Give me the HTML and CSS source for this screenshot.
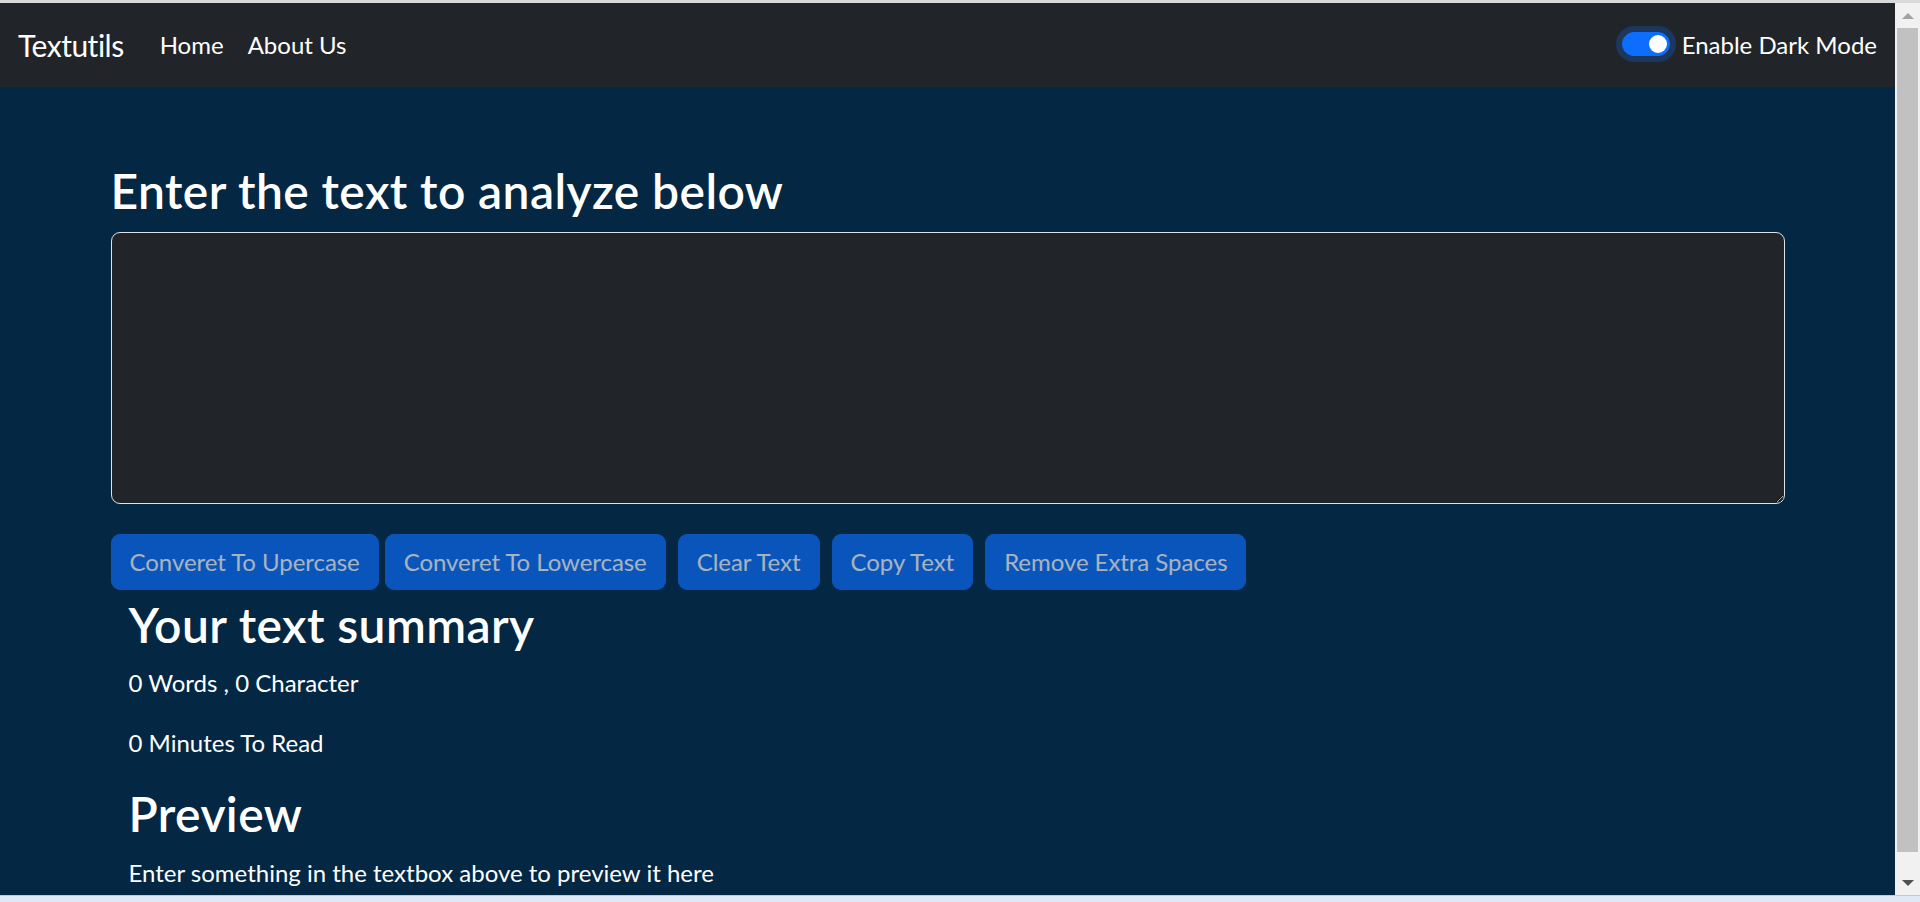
FILE: index.html
```html
<!DOCTYPE html>
<html lang="en">
<head>
<meta charset="utf-8">
<title>Textutils</title>
<link rel="stylesheet" href="styles.css">
</head>
<body>
<div class="window">
  <div class="chrome-top"></div>
  <div class="viewport">
    <div class="page">
      <nav class="navbar">
        <a class="brand" href="#">Textutils</a>
        <ul class="nav-links">
          <li><a class="nav-link" href="#">Home</a></li>
          <li><a class="nav-link" href="#">About Us</a></li>
        </ul>
        <div class="switch-wrap">
          <span class="switch"><span class="knob"></span></span>
          <label class="switch-label">Enable Dark Mode</label>
        </div>
      </nav>
      <div class="alert-slot"></div>
      <main class="container">
        <h1 class="heading">Enter the text to analyze below</h1>
        <div class="field">
          <textarea class="text-input" id="myBox"></textarea>
        </div>
        <div class="btn-row">
          <button class="btn btn-first">Converet To Upercase</button>
          <button class="btn">Converet To Lowercase</button>
          <button class="btn">Clear Text</button>
          <button class="btn">Copy Text</button>
          <button class="btn">Remove Extra Spaces</button>
        </div>
        <section class="summary">
          <h2 class="heading">Your text summary</h2>
          <p class="line">0 Words , 0 Character</p>
          <p class="line">0 Minutes To Read</p>
          <h2 class="heading">Preview</h2>
          <p class="line">Enter something in the textbox above to preview it here</p>
        </section>
      </main>
    </div>
    <div class="scrollbar">
      <div class="sb-btn"><span class="tri-up"></span></div>
      <div class="sb-thumb"></div>
      <div class="sb-space"></div>
      <div class="sb-btn"><span class="tri-down"></span></div>
    </div>
  </div>
  <div class="chrome-bottom"></div>
</div>
</body>
</html>
```
FILE: styles.css
```css
* { box-sizing: border-box; }

html, body {
  margin: 0;
  padding: 0;
}

body {
  font-family: "Lato", "Noto Sans", sans-serif;
  font-size: 24px;
  color: #ffffff;
  background: #042743;
  overflow: hidden;
}

.window {
  width: 1920px;
  height: 902px;
  display: flex;
  flex-direction: column;
}

.chrome-top {
  height: 3px;
  background: #d9d9d9;
  flex: none;
}

.viewport {
  flex: 1;
  display: flex;
  min-height: 0;
}

.page {
  flex: 1;
  min-width: 0;
  background: #042743;
  overflow: hidden;
}

/* navbar */
.navbar {
  height: 84px;
  background: #212529;
  display: flex;
  align-items: center;
  padding: 0 18px;
}

.brand {
  font-size: 30px;
  letter-spacing: -0.5px;
  color: #ffffff;
  text-decoration: none;
  margin-right: 24px;
  line-height: 1.2;
}

.nav-links {
  list-style: none;
  margin: 0;
  padding: 0;
  display: flex;
}

.nav-link {
  display: block;
  padding: 12px;
  color: #ffffff;
  text-decoration: none;
  line-height: 1.5;
}

.switch-wrap {
  margin-left: auto;
  display: flex;
  align-items: center;
  gap: 12px;
}

.switch {
  width: 48px;
  height: 24px;
  border-radius: 12px;
  background: #0d6efd;
  border: 1.5px solid #0d6efd;
  box-shadow: 0 0 0 6px rgba(13, 110, 253, 0.25);
  display: flex;
  align-items: center;
  justify-content: flex-end;
  padding-right: 1.5px;
  margin-top: -2px;
}

.knob {
  width: 18px;
  height: 18px;
  border-radius: 50%;
  background: #ffffff;
}

.switch-label {
  line-height: 1.5;
}

/* main */
.alert-slot {
  height: 75px;
}

.container {
  max-width: 1710px;
  margin: 0 auto;
  padding: 0 18px;
}

.heading {
  font-size: 48px;
  font-weight: 600;
  letter-spacing: 0.4px;
  line-height: 1.2;
  margin: 0 0 12px;
}

.field {
  margin-bottom: 24px;
}

.text-input {
  display: block;
  width: 100%;
  height: 272px;
  background: #212529;
  color: #ffffff;
  border: 1.5px solid #dee2e6;
  border-radius: 9px;
  padding: 9px 18px;
  font: inherit;
  resize: vertical;
  outline: none;
}

.btn-row {
  display: flex;
  flex-wrap: wrap;
}

.btn {
  font-family: inherit;
  font-size: 24px;
  letter-spacing: -0.05px;
  line-height: 1.5;
  color: #ffffff;
  background: #0d6efd;
  border: 1px solid #0d6efd;
  border-radius: 9px;
  padding: 9px 18px;
  margin: 6px 6px;
  opacity: 0.65;
  cursor: default;
}

.btn-first {
  margin-left: 0;
  margin-right: 0;
}

.summary {
  padding: 0 18px;
}

.line {
  margin: 0 0 24px;
  line-height: 1.5;
}

/* fake browser chrome */
.scrollbar {
  width: 25px;
  flex: none;
  background: #f1f1f1;
  display: flex;
  flex-direction: column;
}

.sb-btn {
  height: 25px;
  flex: none;
  display: flex;
  align-items: center;
  justify-content: center;
}

.tri-up {
  width: 0;
  height: 0;
  border-left: 6px solid transparent;
  border-right: 6px solid transparent;
  border-bottom: 6px solid #a3a3a3;
}

.tri-down {
  width: 0;
  height: 0;
  border-left: 6px solid transparent;
  border-right: 6px solid transparent;
  border-top: 6px solid #505050;
}

.sb-thumb {
  height: 824px;
  flex: none;
  margin: 0 2px;
  background: #c1c1c1;
}

.sb-space {
  flex: 1;
}

.chrome-bottom {
  height: 7px;
  flex: none;
  background: #dfe8f4;
  border-top: 1px solid #c5cad1;
}
```
